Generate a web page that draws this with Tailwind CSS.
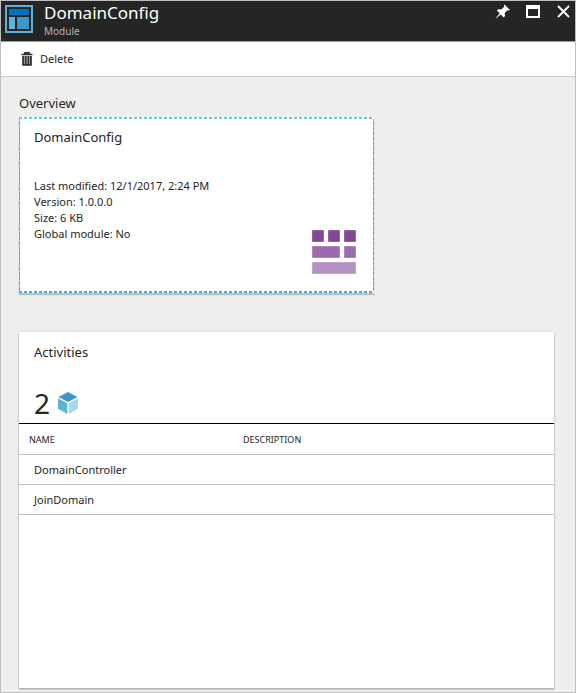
<!DOCTYPE html>
<html lang="en">
<head>
<meta charset="utf-8">
<meta name="viewport" content="width=device-width, initial-scale=1">
<title>DomainConfig - Module</title>
<script src="https://cdn.jsdelivr.net/npm/@tailwindcss/browser@4"></script>
</head>
<body class="flex min-h-screen flex-col border border-[#bfbfbf] bg-[#eeeeee] font-['Segoe_UI','Noto_Sans',sans-serif] text-[11px] text-[#252525]">
  <header class="flex h-[41px] items-start justify-between border-b border-[#999999] bg-[#252525] pr-1 pl-1 text-white">
    <div class="flex gap-[11px]">
      <svg class="mt-1 size-7" viewBox="0 0 28 28" aria-hidden="true">
        <rect width="28" height="28" fill="#59b4d9"/>
        <rect x="2" y="2" width="24" height="24" fill="#252525"/>
        <rect x="4" y="4" width="20" height="6" fill="#0072c6"/>
        <rect x="4" y="12" width="6" height="12" fill="#59b4d9"/>
        <rect x="12" y="12" width="12" height="12" fill="#3999c6"/>
      </svg>
      <div>
        <h1 class="text-[17px] leading-6">DomainConfig</h1>
        <p class="text-[10px] leading-3 text-[#b5b5b5]">Module</p>
      </div>
    </div>
    <div class="flex gap-[14px] pt-[3px]">
      <button type="button" aria-label="Pin" class="size-4">
        <svg class="size-4" viewBox="0 0 16 16" fill="#fff"><path d="M9.5 0.5 15 6l-1.5 .6-1-.3-2.800 2.800 .3 3-1.300 1.300-3-3L1 14.500.800 14.200l3.900-5L1.900 6.500 3.300 5.200l3 .3L9.200 2.700 8.900 1.600Z"/></svg>
      </button>
      <button type="button" aria-label="Maximize" class="size-4">
        <svg class="size-4" viewBox="0 0 16 16"><path fill="#fff" fill-rule="evenodd" d="M1 1h14v13H1ZM3 5v7h10V5Z"/></svg>
      </button>
      <button type="button" aria-label="Close" class="size-4">
        <svg class="size-4" viewBox="0 0 16 16" fill="none" stroke="#fff" stroke-width="1.800"><path d="M3 2 14 13M14 2 3 13"/></svg>
      </button>
    </div>
  </header>

  <div class="flex h-[35px] items-center border-b border-[#cccccc] bg-white pl-5">
    <button type="button" class="flex items-center gap-[7px]">
      <svg class="h-[14px] w-3" viewBox="0 0 12 14" aria-hidden="true" fill="none" stroke="#252525">
        <path d="M0.500 2.500h11M4 2V.7h4V2" stroke-width="1.600"/><path fill="#999999" stroke="none" d="M2 4h8v9H2Z"/><path d="M2 4v9h8V4" stroke-width="1.600"/><path d="M4.700 4v9M7.300 4v9" stroke-width="1.200"/>
      </svg>
      Delete
    </button>
  </div>

  <main class="flex grow flex-col pt-4 pr-[21px] pb-1 pl-[18px]">
    <h2 class="text-[13px] leading-5">Overview</h2>
    <section class="mt-1 flex h-44 w-[355px] max-w-full flex-col bg-white bg-[image:repeating-linear-gradient(90deg,#59cdec_0_3px,#fff_3px_5px),repeating-linear-gradient(90deg,#35b4dc_0_3px,#fff_3px_5px),repeating-linear-gradient(180deg,#35b4dc_0_3px,#eaa58c_3px_5px),repeating-linear-gradient(180deg,#35b4dc_0_3px,#eaa58c_3px_5px)] bg-[length:100%_2px,100%_2px,1px_100%,1px_100%] bg-[position:top,bottom,left,right] bg-no-repeat px-[15px] pt-[10px] shadow-[0_2px_1px_rgba(0,0,0,0.2)]">
      <h3 class="text-[13px] leading-5">DomainConfig</h3>
      <div class="mt-[31px] flex justify-between">
        <div class="leading-4">
          <p>Last modified: 12/1/2017, 2:24 PM</p>
          <p>Version: 1.0.0.0</p>
          <p>Size: 6 KB</p>
          <p>Global module: No</p>
        </div>
        <svg class="mt-[52px] mr-[3px] h-11 w-11" viewBox="0 0 44 44" aria-hidden="true">
          <g fill="#804998" stroke="#68217a" stroke-opacity=".5"><path d="M.5 .5h11v11H.5ZM16.500 .5h11v11h-11ZM32.500 .5h11v11h-11Z"/></g>
          <g fill="#9b6bae" stroke="#8a55a0" stroke-opacity=".5"><path d="M.5 16.500h27v11H.5ZM32.500 16.500h11v11h-11Z"/></g>
          <path fill="#b591c3" stroke="#a67fb6" stroke-opacity=".5" d="M.5 32.500h43v11H.5Z"/>
        </svg>
      </div>
    </section>

    <section class="mt-[39px] flex grow flex-col bg-white pt-[10px] shadow-[0_1px_2px_rgba(0,0,0,0.4)]">
      <h3 class="px-[15px] text-[13px] leading-5">Activities</h3>
      <div class="mt-[21px] flex h-10 items-center gap-2 px-[15px]">
        <span class="text-[28px] leading-10">2</span>
        <svg class="h-[22px] w-5" viewBox="0 0 20 22" aria-hidden="true">
          <path fill="#3999c6" d="M10 0 19.500 5 10 10 .5 5Z"/>
          <path fill="#59b4d9" d="M0 6.200 9.300 11.200V22L0 16.800Z"/>
          <path fill="#a8d8ec" d="M20 6.200 10.700 11.200V22L20 16.800Z"/>
        </svg>
      </div>
      <table class="w-full table-fixed border-collapse text-left">
        <thead>
          <tr class="h-[31px] border-t border-b border-t-black border-b-[#bfbfbf] text-[9px]">
            <th class="w-2/5 pt-[2px] pl-[10px] font-normal">NAME</th>
            <th class="pt-[2px] pl-[10px] font-normal">DESCRIPTION</th>
          </tr>
        </thead>
        <tbody>
          <tr class="h-[30px] border-b border-[#bfbfbf]"><td class="pt-[2px] pl-[15px]">DomainController</td><td></td></tr>
          <tr class="h-[30px] border-b border-[#bfbfbf]"><td class="pt-[2px] pl-[15px]">JoinDomain</td><td></td></tr>
        </tbody>
      </table>
    </section>
  </main>
</body>
</html>
